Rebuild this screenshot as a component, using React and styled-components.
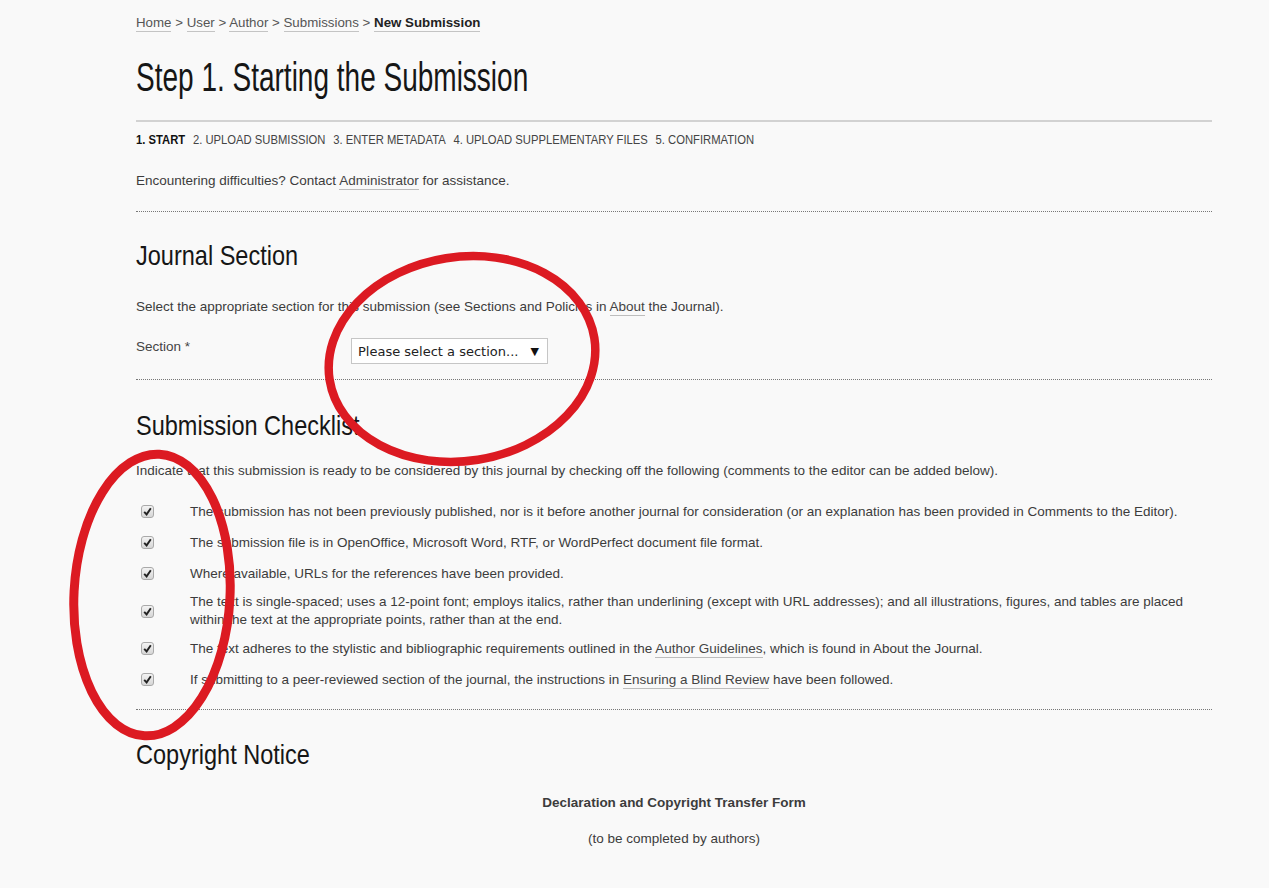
import React from "react";
import styled, { createGlobalStyle } from "styled-components";

const GlobalStyle = createGlobalStyle`
  html, body {
    margin: 0;
    padding: 0;
    background: #f9f9f9;
  }
  body {
    font-family: "Liberation Sans", Arial, sans-serif;
    color: #3a3a3a;
  }
`;

const Page = styled.div`
  position: relative;
  width: 1076px;
  min-height: 888px;
  padding: 14px 0 0 136px;
  box-sizing: content-box;
`;

// the original page uses a narrow face for titles; squeeze the glyphs
const Narrow = styled.span`
  display: inline-block;
  white-space: nowrap;
  transform: scaleX(${(p) => p.$x});
  transform-origin: left center;
`;

const Crumbs = styled.div`
  font-size: 13.3px;
  line-height: 18px;
  color: #555;
`;

const Crumb = styled.a`
  color: ${(p) => (p.current ? "#222" : "#555")};
  font-weight: ${(p) => (p.current ? 700 : 400)};
  text-decoration: none;
  border-bottom: 1px solid #c4c4c4;
  padding-bottom: 1px;
`;

const Title = styled.h2`
  margin: 23px 0 0;
  font-size: 40px;
  line-height: 44px;
  font-weight: 400;
  color: #161616;
`;

const Rule = styled.div`
  margin-top: 21px;
  border-top: 2px solid #d2d2d2;
`;

const Steps = styled.div`
  margin-top: 10px;
  font-size: 13px;
  line-height: 16px;
  text-transform: uppercase;
  color: #444;
`;

const Step = styled.span`
  margin-right: 9px;
  font-weight: ${(p) => (p.active ? 700 : 400)};
  color: ${(p) => (p.active ? "#111" : "#444")};
`;

const Para = styled.p`
  margin: ${(p) => p.$top || 0}px 0 0;
  font-size: 13.5px;
  line-height: 16px;
  color: #3c3c3c;
  text-align: ${(p) => (p.center ? "center" : "left")};
  font-weight: ${(p) => (p.bold ? 700 : 400)};
`;

const Link = styled.a`
  color: #444;
  text-decoration: none;
  border-bottom: 1px solid #bdbdbd;
  padding-bottom: 1px;
`;

const Dotted = styled.div`
  margin-top: ${(p) => p.$top}px;
  border-top: 1px dotted #777;
`;

const Heading = styled.h3`
  margin: ${(p) => p.$top}px 0 0;
  font-size: 28px;
  line-height: 32px;
  font-weight: 400;
  color: #161616;
`;

const FieldRow = styled.div`
  margin-top: 23px;
  display: grid;
  grid-template-columns: 215px auto;
  align-items: start;
`;

const Label = styled.div`
  font-size: 13.5px;
  line-height: 16px;
  padding-top: 1px;
  color: #444;
`;

const Select = styled.div`
  width: 197px;
  height: 26px;
  box-sizing: border-box;
  border: 1px solid #c6c6c6;
  background: #fff;
  display: flex;
  align-items: center;
  justify-content: space-between;
  padding: 0 8px 0 6px;
  font-family: "DejaVu Sans", Verdana, sans-serif;
  font-size: 13px;
  color: #222;
`;

const Arrow = styled.span`
  font-size: 11px;
  color: #111;
`;

const Checklist = styled.div`
  margin-top: 17px;
  display: flex;
  flex-direction: column;
`;

const Item = styled.div`
  display: grid;
  grid-template-columns: 54px 1fr;
  align-items: center;
  padding: ${(p) => (p.tight ? "4px 0" : "7px 0")};
  font-size: 13.5px;
  line-height: ${(p) => (p.tight ? 18 : 17)}px;
  color: #3c3c3c;
`;

const Box = styled.span`
  margin-left: 5px;
  width: 13px;
  height: 13px;
  box-sizing: border-box;
  border: 1px solid #a9a9a9;
  border-radius: 3px;
  background: linear-gradient(#f3f3f3, #d6d6d6);
  display: flex;
  align-items: center;
  justify-content: center;
`;

const Overlay = styled.svg`
  position: absolute;
  left: 0;
  top: 0;
  pointer-events: none;
`;

const steps = [
  "1. Start",
  "2. Upload Submission",
  "3. Enter Metadata",
  "4. Upload Supplementary Files",
  "5. Confirmation",
];

const Check = () => (
  <Box>
    <svg width="9" height="9" viewBox="0 0 9 9">
      <path d="M1.2 4.8 L3.6 7.4 L7.8 1.3" fill="none" stroke="#222" strokeWidth="1.9" />
    </svg>
  </Box>
);

const App = () => {
  return (
    <>
      <GlobalStyle />
      <Page>
        <Crumbs>
          <Crumb>Home</Crumb> &gt; <Crumb>User</Crumb> &gt; <Crumb>Author</Crumb> &gt;{" "}
          <Crumb>Submissions</Crumb> &gt; <Crumb current>New Submission</Crumb>
        </Crumbs>
        <Title>
          <Narrow $x={0.7}>Step 1. Starting the Submission</Narrow>
        </Title>
        <Rule />
        <Steps>
          <Narrow $x={0.865}>
            {steps.map((s, i) => (
              <Step key={s} active={i === 0}>
                {s}
              </Step>
            ))}
          </Narrow>
        </Steps>
        <Para $top={25}>
          Encountering difficulties? Contact <Link>Administrator</Link> for assistance.
        </Para>
        <Dotted $top={22} />

        <Heading $top={28}>
          <Narrow $x={0.84}>Journal Section</Narrow>
        </Heading>
        <Para $top={27}>
          Select the appropriate section for this submission (see Sections and Policies in{" "}
          <Link>About</Link> the Journal).
        </Para>
        <FieldRow>
          <Label>Section *</Label>
          <Select>
            <span>Please select a section...</span>
            <Arrow>▼</Arrow>
          </Select>
        </FieldRow>
        <Dotted $top={15} />

        <Heading $top={30}>
          <Narrow $x={0.84}>Submission Checklist</Narrow>
        </Heading>
        <Para $top={21}>
          Indicate that this submission is ready to be considered by this journal by checking off the
          following (comments to the editor can be added below).
        </Para>
        <Checklist>
          <Item>
            <Check />
            <span>
              The submission has not been previously published, nor is it before another journal for
              consideration (or an explanation has been provided in Comments to the Editor).
            </span>
          </Item>
          <Item>
            <Check />
            <span>
              The submission file is in OpenOffice, Microsoft Word, RTF, or WordPerfect document file
              format.
            </span>
          </Item>
          <Item>
            <Check />
            <span>Where available, URLs for the references have been provided.</span>
          </Item>
          <Item tight>
            <Check />
            <span>
              The text is single-spaced; uses a 12-point font; employs italics, rather than underlining
              (except with URL addresses); and all illustrations, figures, and tables are placed
              <br />
              within the text at the appropriate points, rather than at the end.
            </span>
          </Item>
          <Item>
            <Check />
            <span>
              The text adheres to the stylistic and bibliographic requirements outlined in the{" "}
              <Link>Author Guidelines</Link>, which is found in About the Journal.
            </span>
          </Item>
          <Item>
            <Check />
            <span>
              If submitting to a peer-reviewed section of the journal, the instructions in{" "}
              <Link>Ensuring a Blind Review</Link> have been followed.
            </span>
          </Item>
        </Checklist>
        <Dotted $top={14} />

        <Heading $top={29}>
          <Narrow $x={0.84}>Copyright Notice</Narrow>
        </Heading>
        <Para $top={24} center bold>
          Declaration and Copyright Transfer Form
        </Para>
        <Para $top={20} center>
          (to be completed by authors)
        </Para>

        <Overlay width="1269" height="888" viewBox="0 0 1269 888">
          <ellipse
            cx="462"
            cy="359"
            rx="134"
            ry="102"
            transform="rotate(-9 462 359)"
            fill="none"
            stroke="#dc1a22"
            strokeWidth="8.5"
          />
          <ellipse
            cx="152"
            cy="595"
            rx="78"
            ry="141"
            transform="rotate(3 152 595)"
            fill="none"
            stroke="#dc1a22"
            strokeWidth="9"
          />
        </Overlay>
      </Page>
    </>
  );
};

export default App;
